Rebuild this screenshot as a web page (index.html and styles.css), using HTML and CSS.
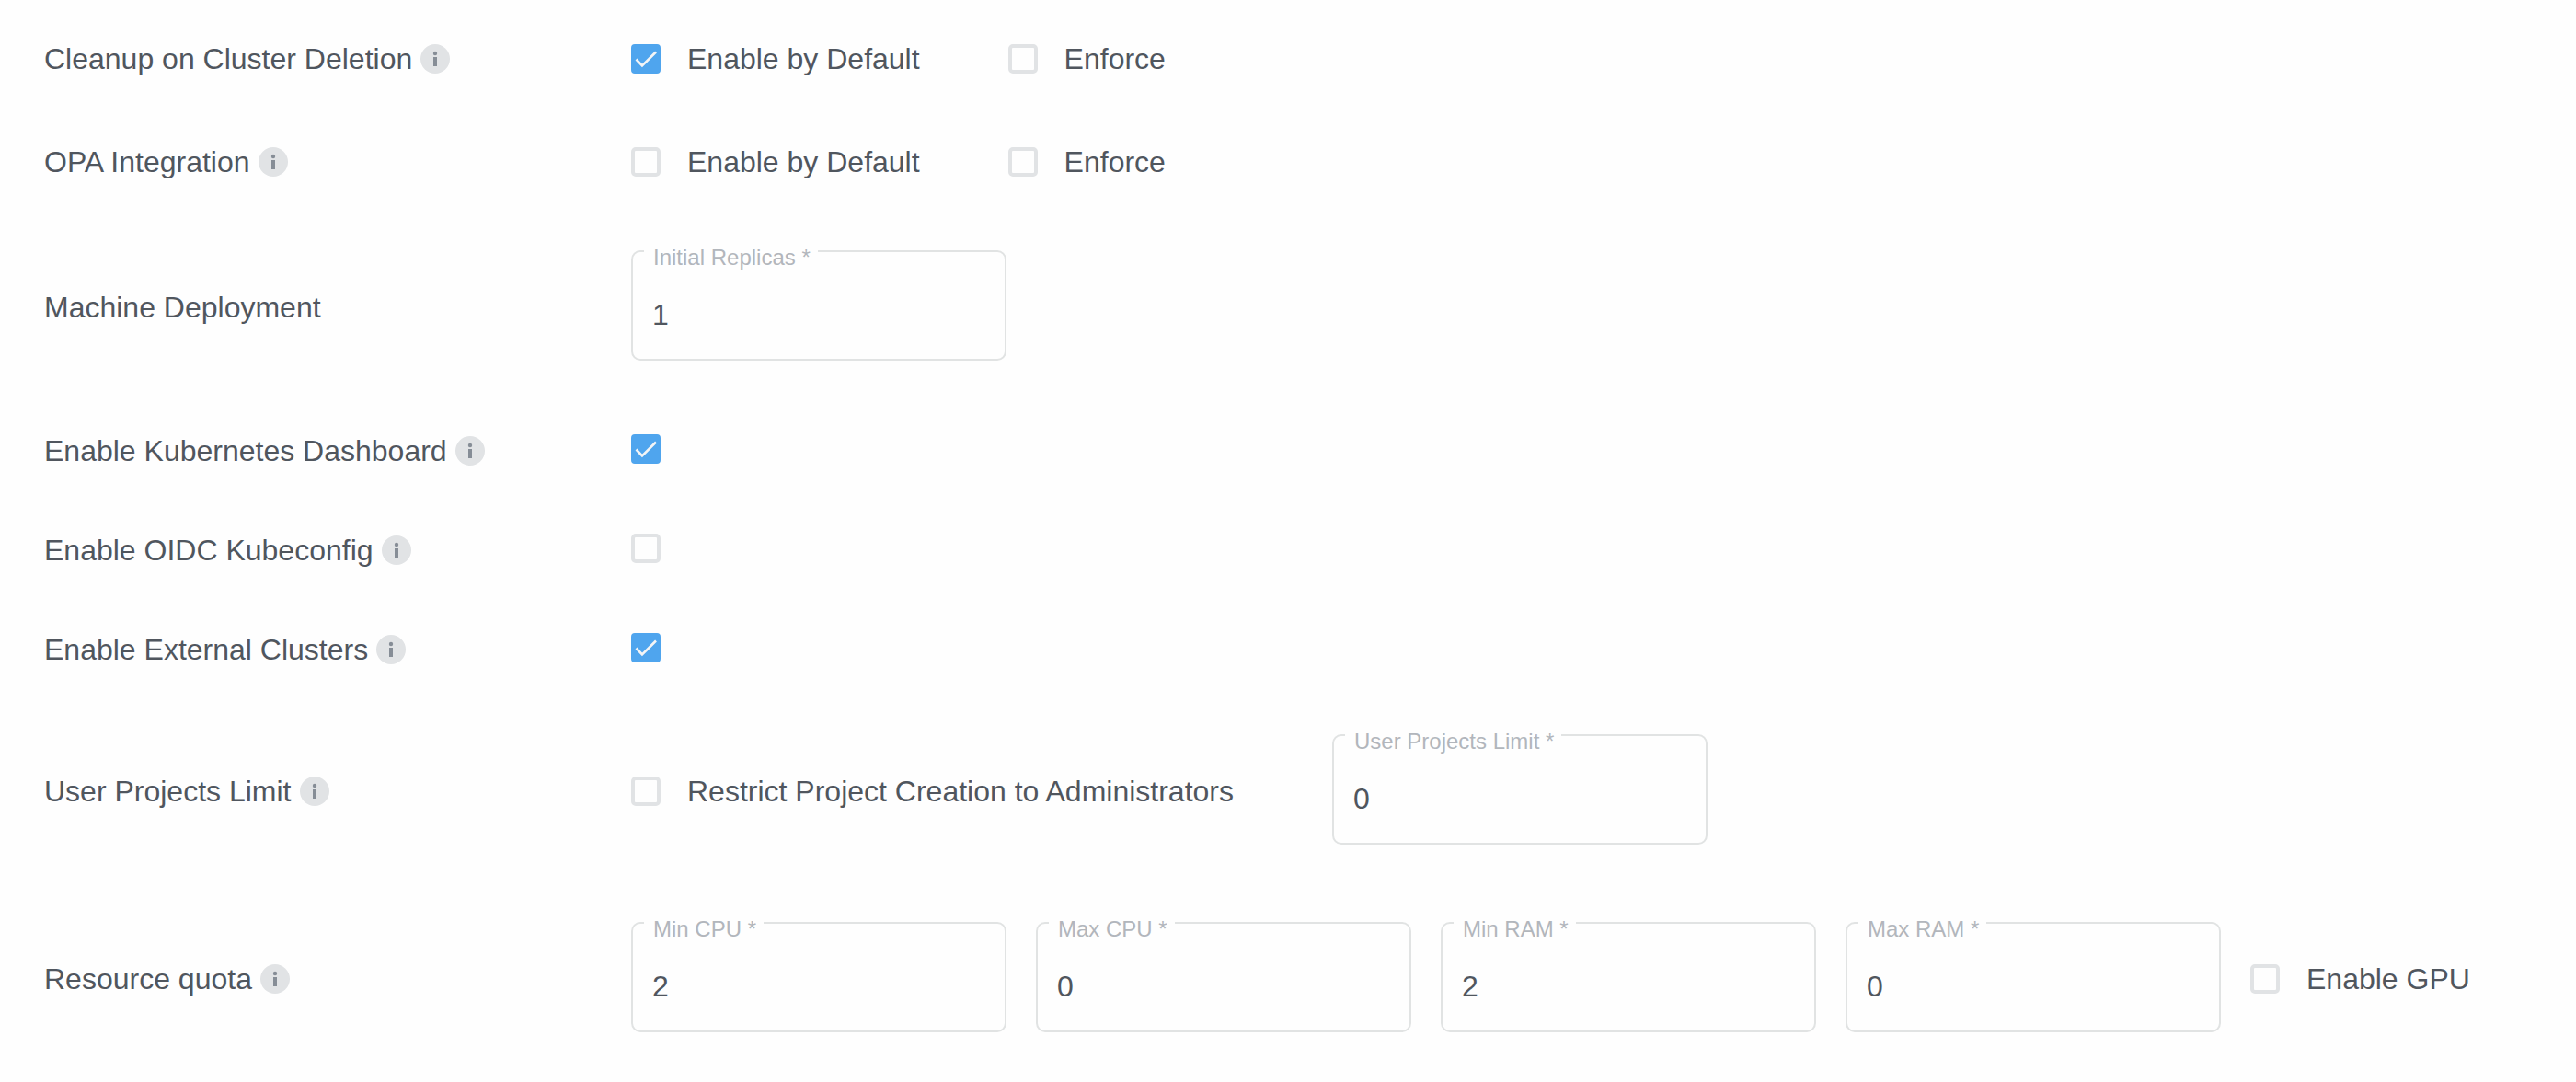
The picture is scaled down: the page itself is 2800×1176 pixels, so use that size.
FILE: index.html
```html
<!DOCTYPE html>
<html lang="en">
<head>
  <meta charset="utf-8">
  <meta name="viewport" content="width=device-width, initial-scale=1">
  <title>Defaults and Limits</title>
  <link rel="stylesheet" href="styles.css">
</head>
<body>
  <svg class="sprite" aria-hidden="true">
    <symbol id="info" viewBox="0 0 32 32">
      <circle cx="16" cy="16" r="16" fill="#e1e3e5"/>
      <circle cx="16" cy="10" r="2.2" fill="#868d96"/>
      <path d="M14 14h4v10h-4z" fill="#868d96"/>
    </symbol>
    <symbol id="tick" viewBox="0 0 32 32">
      <path d="M5.5 16.5l6.5 7L27 8.5" fill="none" stroke="#f4f5f6" stroke-width="2.6"/>
    </symbol>
  </svg>

  <form class="settings">
    <div class="row row--options" role="group" aria-labelledby="cleanup">
      <div class="title"><span id="cleanup">Cleanup on Cluster Deletion</span><svg class="info"><use href="#info"/></svg></div>
      <div class="controls controls--wide">
        <label class="option"><span class="check"><input type="checkbox" checked><svg><use href="#tick"/></svg></span>Enable by Default</label>
        <label class="option"><span class="check"><input type="checkbox"><svg><use href="#tick"/></svg></span>Enforce</label>
      </div>
    </div>

    <div class="row row--options" role="group" aria-labelledby="opa">
      <div class="title"><span id="opa">OPA Integration</span><svg class="info"><use href="#info"/></svg></div>
      <div class="controls controls--wide">
        <label class="option"><span class="check"><input type="checkbox"><svg><use href="#tick"/></svg></span>Enable by Default</label>
        <label class="option"><span class="check"><input type="checkbox"><svg><use href="#tick"/></svg></span>Enforce</label>
      </div>
    </div>

    <div class="row row--deployment" role="group" aria-labelledby="deployment">
      <div class="title"><span id="deployment">Machine Deployment</span></div>
      <div class="controls">
        <div class="field"><label for="replicas">Initial Replicas *</label><input id="replicas" type="number" value="1" required></div>
      </div>
    </div>

    <div class="row row--toggle">
      <div class="title"><label for="dashboard">Enable Kubernetes Dashboard</label><svg class="info"><use href="#info"/></svg></div>
      <div class="controls">
        <span class="check"><input id="dashboard" type="checkbox" checked><svg><use href="#tick"/></svg></span>
      </div>
    </div>

    <div class="row row--toggle">
      <div class="title"><label for="oidc">Enable OIDC Kubeconfig</label><svg class="info"><use href="#info"/></svg></div>
      <div class="controls">
        <span class="check"><input id="oidc" type="checkbox"><svg><use href="#tick"/></svg></span>
      </div>
    </div>

    <div class="row row--toggle">
      <div class="title"><label for="external">Enable External Clusters</label><svg class="info"><use href="#info"/></svg></div>
      <div class="controls">
        <span class="check"><input id="external" type="checkbox" checked><svg><use href="#tick"/></svg></span>
      </div>
    </div>

    <div class="row row--limit" role="group" aria-labelledby="limit">
      <div class="title"><span id="limit">User Projects Limit</span><svg class="info"><use href="#info"/></svg></div>
      <div class="controls controls--wider">
        <label class="option"><span class="check"><input type="checkbox"><svg><use href="#tick"/></svg></span>Restrict Project Creation to Administrators</label>
        <div class="field"><label for="projects">User Projects Limit *</label><input id="projects" type="number" value="0" required></div>
      </div>
    </div>

    <div class="row row--quota" role="group" aria-labelledby="quota">
      <div class="title"><span id="quota">Resource quota</span><svg class="info"><use href="#info"/></svg></div>
      <div class="controls">
        <div class="field"><label for="min-cpu">Min CPU *</label><input id="min-cpu" type="number" value="2" required></div>
        <div class="field"><label for="max-cpu">Max CPU *</label><input id="max-cpu" type="number" value="0" required></div>
        <div class="field"><label for="min-ram">Min RAM *</label><input id="min-ram" type="number" value="2" required></div>
        <div class="field"><label for="max-ram">Max RAM *</label><input id="max-ram" type="number" value="0" required></div>
        <label class="option"><span class="check"><input type="checkbox"><svg><use href="#tick"/></svg></span>Enable GPU</label>
      </div>
    </div>
  </form>
</body>
</html>
```

FILE: styles.css
```css
* {
  box-sizing: border-box;
}

body {
  margin: 0;
  background: #fefefe;
  color: #50565e;
  font: 32px/40px "Liberation Sans", Arial, sans-serif;
}

.sprite {
  display: none;
}

.settings {
  padding: 8px 48px;
}

.row {
  display: grid;
  grid-template-columns: 638px 1fr;
  align-items: center;
}

.row--options {
  padding: 36px 0;
}

.row--deployment {
  padding: 40px 0;
}

.row--toggle {
  padding: 34px 0;
}

.row--limit {
  padding: 38px 0;
}

.row--quota {
  padding: 42px 0;
}

.title {
  display: flex;
  align-items: center;
  gap: 9px;
}

.info {
  width: 32px;
  height: 32px;
}

.controls {
  display: flex;
  align-items: center;
  gap: 32px;
}

.controls--wide {
  gap: 96px;
}

.controls--wider {
  gap: 107px;
}

.option {
  display: flex;
  align-items: center;
  gap: 29px;
  white-space: nowrap;
}

.check {
  display: grid;
  flex: none;
  width: 32px;
  height: 32px;
}

.row--toggle .check {
  margin-bottom: 4px;
}

.check input,
.check svg {
  grid-area: 1 / 1;
  width: 32px;
  height: 32px;
}

.check input {
  appearance: none;
  margin: 0;
  border: 4px solid #e1e3e5;
  border-radius: 5px;
}

.check input:checked {
  border-color: #4fa5ee;
  border-radius: 4px;
  background: #4fa5ee;
}

.check svg {
  visibility: hidden;
  pointer-events: none;
}

.check input:checked + svg {
  visibility: visible;
}

.field {
  position: relative;
  width: 408px;
  margin-bottom: 4px;
}

/* The floating label covers the outline behind it. */
.field label {
  position: absolute;
  top: -6px;
  left: 14px;
  padding: 0 8px 0 10px;
  background: #fefefe;
  color: #b2b6bc;
  font-size: 24px;
  line-height: 28px;
}

.field input {
  appearance: textfield;
  display: block;
  width: 100%;
  height: 120px;
  margin: 0;
  padding: 48px 21px 28px;
  border: 2px solid #e1e3e3;
  border-radius: 10px;
  background: transparent;
  color: inherit;
  font: inherit;
}

.field input::-webkit-inner-spin-button {
  appearance: none;
  margin: 0;
}
```
